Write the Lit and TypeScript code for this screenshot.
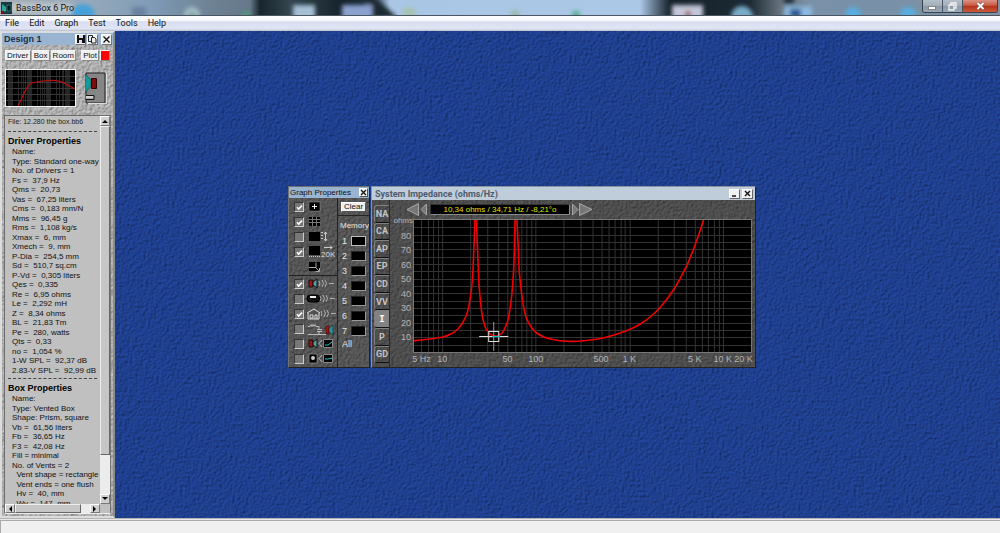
import { LitElement, html, svg, css } from "lit";
import { customElement, property, state } from "lit/decorators.js";

const DRIVER = [
  "Name:", "Type: Standard one-way driver", "No. of Drivers = 1", "Fs =  37,9 Hz", "Qms =  20,73",
  "Vas =  67,25 liters", "Cms =  0,183 mm/N", "Mms =  96,45 g", "Rms =  1,108 kg/s", "Xmax =  6, mm",
  "Xmech =  9, mm", "P-Dia =  254,5 mm", "Sd =  510,7 sq.cm", "P-Vd =  0,305 liters", "Qes =  0,335",
  "Re =  6,95 ohms", "Le =  2,292 mH", "Z =  8,34 ohms", "BL =  21,83 Tm", "Pe =  280, watts",
  "Qts =  0,33", "no =  1,054 %", "1-W SPL =  92,37 dB", "2.83-V SPL =  92,99 dB",
];
const BOX = [
  "Name:", "Type: Vented Box", "Shape: Prism, square", "Vb =  61,56 liters", "Fb =  36,65 Hz",
  "F3 =  42,08 Hz", "Fill = minimal", "No. of Vents = 2", "  Vent shape = rectangle",
  "  Vent ends = one flush", "  Hv =  40, mm", "  Wv =  147, mm",
];

const CURVE: [number, number][][] = [
  [[0, 120.7], [15.7, 119], [28.7, 117], [37.3, 113.7], [44, 108.7], [49, 102], [53.3, 92], [56, 78.7], [58, 62], [59.3, 38.7], [60.7, 0]],
  [[62.3, 0], [63.7, 38.7], [64.7, 62], [66.3, 82], [68.3, 97], [71.3, 107.7], [74.7, 113], [79, 115.7], [84, 115.7], [88, 112.7], [91.3, 106.7], [94, 98.7], [96.7, 82], [98.3, 65.3], [99.7, 42], [100.7, 0]],
  [[102.7, 0], [104, 28.7], [105, 52], [106.7, 68.7], [108.7, 83.7], [112, 98], [117.3, 107.7], [122.3, 113], [129, 116.7], [137.3, 119.3], [145.7, 120.7], [154, 121.3], [162.7, 121.3], [176, 120], [189.3, 117.7], [202.7, 114], [216, 109], [226, 103.7], [236, 96.5], [246, 86.7], [259.3, 69], [271, 47.7], [279.3, 27.5], [285, 11.3], [288.7, 0]],
];

const smooth = (p: [number, number][]) => {
  let d = `M${p[0][0]} ${p[0][1]}`;
  for (let i = 0; i < p.length - 1; i++) {
    const a = p[i - 1] ?? p[i], b = p[i], c = p[i + 1], e = p[i + 2] ?? c;
    d += `C${b[0] + (c[0] - a[0]) / 6} ${b[1] + (c[1] - a[1]) / 6} ${c[0] - (e[0] - b[0]) / 6} ${c[1] - (e[1] - b[1]) / 6} ${c[0]} ${c[1]}`;
  }
  return d;
};

const hzToX = (hz: number, width: number) => (Math.log10(hz / 5) / Math.log10(4000)) * width;

const frequencies = () => {
  const out: number[] = [];
  for (const decade of [1, 10, 100, 1000, 10000])
    for (let n = 1; n < 10; n++) {
      const f = n * decade;
      if (f > 5 && f < 20000) out.push(f);
    }
  return out;
};

/** Embossed stone surface that fills its positioned parent. */
@customElement("stone-surface")
class StoneSurface extends LitElement {
  @property() tint = "#888888";
  @property({ type: Number }) relief = 1;
  @property({ type: Number }) grain = 0.3;
  static styles = css`
    :host { position: absolute; inset: 0; z-index: 0; pointer-events: none; overflow: hidden; }
    svg { display: block; width: 100%; height: 100%; }
  `;
  render() {
    return html`<svg aria-hidden="true">
      <filter id="f" x="0" y="0" width="100%" height="100%" color-interpolation-filters="sRGB">
        <feTurbulence type="fractalNoise" baseFrequency=${this.grain} numOctaves="2" seed="4" result="n" />
        <feDiffuseLighting in="n" surfaceScale=${this.relief} diffuseConstant="1.15" lighting-color=${this.tint}>
          <feDistantLight azimuth="225" elevation="60" />
        </feDiffuseLighting>
      </filter>
      <rect width="100%" height="100%" filter="url(#f)" />
    </svg>`;
  }
}

/** Design panel docked at the left of the desktop. */
@customElement("design-panel")
class DesignPanel extends LitElement {
  static styles = css`
    :host { position: relative; display: flex; flex-direction: column; box-sizing: border-box; width: 115px; min-height: 0;
      border: 2px solid #dcdcdc; border-right-color: #8c8c8c; background: #acacac; color: #111; font: 8px/9px "Liberation Sans", Arial, sans-serif; }
    header, .tools, .view, .list { position: relative; z-index: 1; }
    header { display: flex; align-items: center; gap: 1px; height: 12px; padding: 0 1px 0 2px; background: #99b4d1; }
    h2 { margin: 0; flex: 1; font-size: 9px; line-height: 12px; color: #1b2c44; }
    button { margin: 0; padding: 0; box-sizing: border-box; background: #f0f0f0; color: #111; font: inherit; white-space: nowrap;
      border: 1px solid #fff; border-right-color: #777; border-bottom-color: #777; }
    header button { display: grid; place-items: center; width: 11px; height: 11px; }
    header .close { margin-left: 2px; }
    .tools { display: flex; gap: 1px; margin: 5px 3px 0; height: 11px; }
    .tools button { line-height: 9px; flex: 1 1 auto; border-color: #f4f4f4; border-right-color: #888; border-bottom-color: #888; }
    .tools .gap { margin-left: 4px; }
    .tools .swatch { flex: 0 0 10px; background: #f00; }
    .view { display: flex; align-items: center; justify-content: space-between; margin: 8px 6px 0 3px; }
    .mini { display: block; border: 1px solid #f4f4f4; background: #000; }
    .view svg { display: block; }
    .list { display: grid; grid-template: minmax(0, 1fr) 9px / minmax(0, 1fr) 10px; flex: 1; min-height: 0; margin: 8px 2px 2px; background: #c0c0c0;
      border: 1px solid #6c6c6c; border-right-color: #777; border-bottom-color: #eee; }
    .text { overflow: hidden; padding: 0 0 0 3px; white-space: nowrap; }
    .file { font-size: 7px; line-height: 12px; color: #222; }
    h3 { margin: 0; font-size: 9px; line-height: 11px; color: #000; }
    .rule { height: 3px; margin: 0 3px 4px 0; border-bottom: 1px dashed #444; }
    ul { display: grid; grid-auto-rows: 1fr; list-style: none; margin: 0; padding: 0 0 0 4px; }
    li { white-space: pre; }
    .driver { height: 228px; }
    .box { height: 114px; }
    .vbar, .hbar { display: flex; background: #ececec; }
    .vbar { flex-direction: column; }
    .hbar button, .vbar button { display: grid; place-items: center; flex: 0 0 10px; background: #d0d0d0; }
    .vbar button { width: 10px; }
    .vbar .up + .thumb { flex: 0 1 329px; }
    .thumb { background: #c6c6c6; border: 1px solid #eee; border-right-color: #666; border-bottom-color: #666; box-sizing: border-box; }
    .hbar .thumb { width: 66px; }
    .fill { flex: 1; }
  `;
  private miniGrid() {
    const W = 69;
    return frequencies().map((f) => svg`<path d="M${Math.round(hzToX(f, W)) + 0.5} 0V36" stroke="#999" stroke-opacity=".25" />`);
  }
  render() {
    return html`
      <stone-surface tint="#b0b0b0" relief="1" grain="0.38"></stone-surface>
      <header>
        <h2>Design 1</h2>
        <button aria-label="Save"><svg width="8" height="8"><path d="M0 0h8v8h-8z" fill="#111" /><path d="M2 0h4v3h-4zM2 5h3v3h-3z" fill="#dde" /></svg></button>
        <button aria-label="Copy"><svg width="9" height="9" fill="#eee" stroke="#222"><path d="M.5.5h4v6h-4z" /><path d="M3.5 2.5h3l1.5 1.5v4h-4.500z" /></svg></button>
        <button class="close" aria-label="Close"><svg width="7" height="7"><path d="M.5.5l6 6M6.5.5l-6 6" stroke="#111" stroke-width="1.3" /></svg></button>
      </header>
      <div class="tools">
        <button>Driver</button><button>Box</button><button>Room</button><button class="gap">Plot</button><button class="swatch" aria-label="Plot colour"></button>
      </div>
      <div class="view">
        <svg class="mini" width="69" height="36" role="img" aria-label="Response preview">
          ${this.miniGrid()}
          ${[6, 12, 18, 24, 30].map((y) => svg`<path d="M0 ${y}.5H69" stroke="#3a3a3a" />`)}
          <path d="M12 36C16 29 20 16 25 13Q32 12 37 11Q52 9 58 13L69 19" fill="none" stroke="#b80f0f" stroke-width="1.2" />
        </svg>
        <svg width="22" height="32" role="img" aria-label="Vented box">
          <path d="M1 1H20V31H1z" fill="#868686" stroke="#222" />
          <path d="M21.5 1V31.5H3" fill="none" stroke="#ddd" />
          <path d="M0 2L6 8V14L0 21z" fill="#159a9a" stroke="#0a4a4a" stroke-width=".6" />
          <path d="M6.5 6.5h5v10h-5z" fill="#7a0d0d" stroke="#300" />
          <path d="M1 23.5h8v4h-8" fill="#aaa" stroke="#111" /><path d="M1 25h7" stroke="#fff" />
        </svg>
      </div>
      <section class="list" aria-label="Design properties">
        <div class="text">
          <div class="file">File: 12.280 the box.bb6</div>
          <div class="rule"></div>
          <h3>Driver Properties</h3>
          <ul class="driver">${DRIVER.map((t) => html`<li>${t}</li>`)}</ul>
          <div class="rule"></div>
          <h3>Box Properties</h3>
          <ul class="box">${BOX.map((t) => html`<li>${t}</li>`)}</ul>
        </div>
        <div class="vbar">
          <button class="up" aria-label="Scroll up"><svg width="6" height="4"><path d="M0 4L3 1L6 4z" /></svg></button>
          <div class="thumb"></div><div class="fill"></div>
          <button aria-label="Scroll down"><svg width="6" height="4"><path d="M0 0L3 3L6 0z" /></svg></button>
        </div>
        <div class="hbar">
          <button aria-label="Scroll left"><svg width="4" height="6"><path d="M4 0L1 3L4 6z" /></svg></button>
          <div class="thumb"></div><div class="fill"></div>
          <button aria-label="Scroll right"><svg width="4" height="6"><path d="M0 0L3 3L0 6z" /></svg></button>
        </div>
      </section>`;
  }
}

const waves = (x: number) => svg`<path d="M${x} 4q2 2.5 0 5M${x + 3} 3q3 3.5 0 7M${x + 6} 3q3 3.5 0 7M${x + 10} 6.5h5" fill="none" stroke="#bbb" stroke-width=".9" />`;
const speaker = (x: number) => svg`<g transform="translate(${x} 0)"><path d="M1 3h4v7h-4z" fill="#a01414" stroke="#111" /><path d="M5 5L9 2V11L5 8z" fill="#59a0a4" stroke="#111" /></g>`;

const OPTIONS: { label: string; on: boolean | null; art: unknown }[] = [
  { label: "Cursor", on: true, art: svg`<path d="M1 2h11v9h-11z" fill="#000" stroke="#999" stroke-width=".5" /><path d="M6.5 4v5M4 6.5h5" stroke="#eee" />` },
  { label: "Grid", on: true, art: svg`<path d="M1 2h11v9h-11z" fill="#000" /><path d="M1 4.5h11M1 7.5h11M4.5 2v9M8.5 2v9" stroke="#777" />` },
  { label: "Vertical scale", on: false, art: svg`<path d="M1 2h11v9h-11z" fill="#000" /><path d="M13 2.5h2M13 5.5h2M13 8.5h2M17.5 2v9M16 4l1.5-2l1.5 2M16 9l1.5 2l1.5-2" fill="none" stroke="#ccc" />` },
  { label: "Extend to 20K", on: true, art: svg`<path d="M1 1h11v9h-11z" fill="#000" /><path d="M1 11.5h11" stroke="#ccc" stroke-dasharray="1 1" /><path d="M16 2.5h8M22 .5l2 2l-2 2" fill="none" stroke="#ccc" /><text x="13" y="12">20K</text>` },
  { label: "Resize", on: null, art: svg`<path d="M1 2h11v9h-11z" fill="#000" /><path d="M1 7.5h7v-5M8 8l3 3M11.5 8v3.5h-4" fill="none" stroke="#aaa" />` },
  { label: "Driver response", on: true, art: svg`${speaker(0)}${waves(11)}` },
  { label: "Vent response", on: false, art: svg`<path d="M2 3h7a3 3.5 0 0 1 0 7h-7a3 3.5 0 0 1 0-7z" fill="#111" stroke="#000" /><path d="M2 5h6" stroke="#eee" stroke-width="2" />${waves(12)}` },
  { label: "Room response", on: true, art: svg`<path d="M-1 6L6 2L12 6M0 6v6h11v-6M2 8h3v3h-3zM7 12v-4h2v4" fill="none" stroke="#ddd" />${waves(13)}` },
  { label: "Crossover response", on: false, art: svg`<path d="M0 4.5h2q1-4 2 0q1-4 2 0q1-4 2 0h3v3M9 7.5h5M9 9.5h5M11 10v3M0 12.5h18" fill="none" stroke="#bbb" /><path d="M18 4h3v8h-3z" fill="#a11" stroke="#111" stroke-width=".5" /><path d="M21 6l4-3v10l-4-3z" fill="#2a8f9a" stroke="#111" stroke-width=".5" />` },
  { label: "Driver data", on: false, art: svg`${speaker(0)}<path d="M14 3l-3 3.5l3 3.5" fill="none" stroke="#bbb" /><path d="M15.5 2.5h9v8h-9z" fill="#000" stroke="#888" /><path d="M17 8h3l4-3" fill="none" stroke="#1cc" />` },
  { label: "Box data", on: false, art: svg`<path d="M1 2h8v9h-8z" fill="#000" stroke="#aaa" stroke-width=".6" /><circle cx="5" cy="6" r="2" fill="#ccc" /><path d="M14 3l-3 3.5l3 3.5" fill="none" stroke="#bbb" /><path d="M15.5 2.5h9v8h-9z" fill="#000" stroke="#888" /><path d="M17 7h3l4-1" fill="none" stroke="#1cc" />` },
];

/** Floating palette with the graph display options. */
@customElement("graph-properties")
class GraphProperties extends LitElement {
  static styles = css`
    :host { position: relative; display: flex; flex-direction: column; box-sizing: border-box; border: 1px solid #707070; border-right-color: #222; border-bottom-color: #222; background: #555;
      font: 8px/10px "Liberation Sans", Arial, sans-serif; color: #e4e4e4; overflow: hidden; }
    header { position: relative; z-index: 1; display: flex; align-items: center; height: 11px; background: #99b4d1; color: #111; padding: 0 1px 0 1px; }
    h2 { margin: 0; flex: 1; font-size: 8px; font-weight: 400; white-space: nowrap; }
    header button { display: grid; place-items: center; width: 9px; height: 9px; }
    button { margin: 0; padding: 0; box-sizing: border-box; background: #f0f0f0; border: 1px solid #fff; border-right-color: #555; border-bottom-color: #555; font: inherit; color: #111; }
    .cols { position: relative; z-index: 1; flex: 1; display: grid; grid-template-columns: 49px 1fr; }
    .left, .right { display: flex; flex-direction: column; }
    .left { border-right: 1px solid #222; padding-top: 1px; }
    label, .plain { display: flex; align-items: center; gap: 4px; height: 15px; padding-left: 5px; box-sizing: border-box; }
    .plain { padding-left: 19px; }
    .divide { margin-top: 1px; border-top: 1px solid #222; }
    label svg, .plain svg { overflow: visible; display: block; }
    text { font: 8px "Liberation Sans", Arial, sans-serif; fill: #ddd; }
    input { appearance: none; flex: none; display: grid; place-items: center; margin: 0; width: 10px; height: 10px; box-sizing: border-box; background: #777; border: 1px solid #333; border-right-color: #ccc; border-bottom-color: #ccc; }
    input:checked::after { content: ""; width: 5px; height: 2px; border: solid #fff; border-width: 0 0 2px 2px; box-sizing: content-box; rotate: -45deg; scale: .8; }
    .top { display: flex; padding: 4px 3px; height: 18px; box-sizing: border-box; border-bottom: 1px solid #222; }
    .top button { width: 25px; height: 10px; line-height: 8px; }
    .mem { margin: 5px 0 2px 2px; white-space: nowrap; }
    .slot { display: flex; align-items: center; gap: 4px; height: 15px; padding-left: 4px; font-size: 9px; }
    .slot button { width: 15px; height: 10px; background: #000; border-color: #222 #999 #999 #222; }
    .slot button.active { border-color: #bbb; }
    .all { padding-left: 4px; font-size: 9px; line-height: 12px; }
  `;
  render() {
    return html`
      <stone-surface tint="#565656" relief="1" grain="0.38"></stone-surface>
      <header><h2>Graph Properties</h2><button aria-label="Close"><svg width="7" height="7"><path d="M1 1l5 5M6 1l-5 5" stroke="#111" stroke-width="1.3" /></svg></button></header>
      <div class="cols">
        <div class="left">
          ${OPTIONS.map((o, i) => {
            const art = html`<svg width="26" height="13" aria-hidden="true">${o.art}</svg>`;
            const cls = i === 5 ? "divide" : "";
            return html`<div class=${cls}>${o.on === null
              ? html`<div class="plain">${art}</div>`
              : html`<label><input type="checkbox" aria-label=${o.label} .checked=${o.on} />${art}</label>`}</div>`;
          })}
        </div>
        <div class="right">
          <div class="top"><button>Clear</button></div>
          <div class="mem">Memory</div>
          ${[1, 2, 3, 4, 5, 6, 7].map((n) => html`<div class="slot">${n}<button class=${n === 1 ? "active" : ""} aria-label="Memory ${n}"></button></div>`)}
          <div class="all">All</div>
        </div>
      </div>`;
  }
}

/** Impedance graph window. */
@customElement("impedance-window")
class ImpedanceWindow extends LitElement {
  @state() tab = "I";
  static styles = css`
    :host { position: relative; display: flex; flex-direction: column; box-sizing: border-box; border: 1px solid #8a94a0; border-right-color: #222; border-bottom-color: #222; background: #4a4a4a;
      font: 8px/10px "Liberation Sans", Arial, sans-serif; color: #b4b4b4; overflow: hidden; }
    header { position: relative; z-index: 1; display: flex; align-items: center; gap: 2px; height: 13px; padding: 0 2px 0 3px; background: #bfcddb; color: #4d5b6c; }
    h2 { margin: 0; flex: 1; font: 700 9px/12px Roboto, sans-serif; white-space: nowrap; }
    button { margin: 0; padding: 0; box-sizing: border-box; font: inherit; border: 1px solid #fff; border-right-color: #666; border-bottom-color: #666; background: #f0f0f0; color: #111; }
    header button { display: grid; place-items: center; width: 11px; height: 10px; }
    .body { position: relative; z-index: 1; flex: 1; display: grid; grid-template-columns: 18px 1fr; }
    nav { display: flex; flex-direction: column; padding: 5px 0 4px 2px; border-right: 1px solid #2a2a2a; }
    nav button { flex: 1; background: none; color: #c4c4c4; font: 700 9px/12px Roboto, sans-serif; border: 1px solid #808080; border-right: 0; border-bottom-color: #111; border-radius: 3px 0 0 3px; }
    nav button.on { background: #828282; color: #fff; font-family: "DejaVu Sans Mono", monospace; }
    .pane { display: grid; grid-template: 20px 132px 1fr / 22px 1fr; padding: 0 4px 0 2px; }
    .nav-row { grid-column: 1 / -1; display: flex; align-items: center; padding: 0 0 1px 14px; }
    .nav-row button { background: none; border: 0; display: block; }
    .nav-row svg { display: block; }
    output { width: 140px; height: 11px; box-sizing: border-box; margin: 0 1px 0 2px; background: #000; border: 1px solid #333; border-right-color: #888; border-bottom-color: #888; color: #e2e200; text-align: center; line-height: 9px; white-space: nowrap; }
    .ys { display: flex; flex-direction: column; align-items: flex-end; justify-content: space-between; padding: 0 3px 10px 0; font-size: 9px; margin-top: -4px; line-height: 10px; }
    .unit { font-size: 8px; margin-right: -2px; }
    .plot { display: block; box-sizing: border-box; background: #000; outline: 1px solid #777; overflow: hidden; }
    .xs { grid-column: 2; position: relative; font-size: 9px; line-height: 15px; white-space: nowrap; }
    .xs span { position: absolute; transform: translateX(-50%); }
  `;
  render() {
    const W = 336, H = 132;
    const ticks: [string, number][] = [["5 Hz", 6], ["10", 10], ["50", 50], ["100", 100], ["500", 500], ["1 K", 1000], ["5 K", 5000], ["10 K", 10000], ["20 K", 16600]];
    return html`
      <stone-surface tint="#4e4e4e" relief="1" grain="0.38"></stone-surface>
      <header>
        <h2>System Impedance (ohms/Hz)</h2>
        <button aria-label="Minimize"><svg width="7" height="7"><path d="M1 6h4" stroke="#111" stroke-width="1.5" /></svg></button>
        <button aria-label="Close"><svg width="7" height="7"><path d="M1 1l5 5M6 1l-5 5" stroke="#111" stroke-width="1.4" /></svg></button>
      </header>
      <div class="body">
        <nav>${["NA", "CA", "AP", "EP", "CD", "VV", "I", "P", "GD"].map((t) => html`<button class=${t === this.tab ? "on" : ""} @click=${() => (this.tab = t)}>${t}</button>`)}</nav>
        <div class="pane">
          <div class="nav-row">
            <button aria-label="Fast back"><svg width="14" height="13"><path d="M1 6.5L12.5 .5V12.5z" fill="#777" stroke="#b8b8b8" stroke-width=".8" /></svg></button>
            <button aria-label="Back"><svg width="8" height="13"><path d="M1 6.5L6.5 1V12z" fill="#777" stroke="#b8b8b8" stroke-width=".8" /></svg></button>
            <output>10,34 ohms / 34,71 Hz / -8,21°o</output>
            <button aria-label="Forward"><svg width="8" height="13"><path d="M7 6.5L1.5 1V12z" fill="#777" stroke="#b8b8b8" stroke-width=".8" /></svg></button>
            <button aria-label="Fast forward"><svg width="14" height="13"><path d="M13 6.5L.5 .5V12.5z" fill="#777" stroke="#b8b8b8" stroke-width=".8" /></svg></button>
          </div>
          <div class="ys"><span class="unit">ohms</span>${[80, 70, 60, 50, 40, 30, 20, 10].map((n) => html`<span>${n}</span>`)}</div>
          <svg class="plot" width="100%" height="132" viewBox="0 0 336 132" preserveAspectRatio="none" role="img" aria-label="Impedance curve">
            ${frequencies().map((f) => svg`<path d="M${Math.round(hzToX(f, W)) + 0.5} 0V${H}" stroke="#333" />`)}
            ${Array.from({ length: 17 }, (_, i) => svg`<path d="M0 ${Math.round(((i + 1) * H) / 18)}.5H${W}" stroke="#333" />`)}
            ${CURVE.map((c) => svg`<path d=${smooth(c)} fill="none" stroke="#f00000" stroke-width="1.6" />`)}
            <path d="M65 116.5H94" stroke="#ddd" /><path d="M79.5 102V131" stroke="#999" />
            <path d="M74.5 111.5h10v10h-10z" fill="none" stroke="#ddd" /><path d="M78 116.5h8" stroke="#0cc" />
          </svg>
          <div class="xs">${ticks.map(([t, f]) => html`<span style="left:${(hzToX(f, 1) * 100).toFixed(2)}%">${t}</span>`)}</div>
        </div>
      </div>`;
  }
}

@customElement("app-root")
class AppRoot extends LitElement {
  static styles = css`
    :host { display: flex; flex-direction: column; height: 100vh; overflow: hidden; font-family: Roboto, sans-serif; }
    .title { display: flex; align-items: center; height: 16px; box-sizing: border-box; border-bottom: 1px solid #4a5562; overflow: hidden; position: relative;
      background: linear-gradient(90deg, #a5adb3 0, #96a8ba 9%, #7f9cb8 15%, #6e8294 21%, #66788a 25%, #16242d 26%, #34464f 29%, #16242d 34%, #1c2b36 37%, #a9c6e4 39%, #abc8e6 64%, #15212a 67%, #1b2a33 75%, #66727d 78%, #7a91a8 81%, #7890a8 88%, #8393a3 100%); }
    .glow { position: absolute; inset: 0; width: 100%; height: 100%; }
    .title > .logo, .title > h1, .caption { position: relative; }
    .logo { margin-left: 1px; }
    h1 { margin: 0 0 0 4px; flex: 1; font-size: 9px; line-height: 14px; font-weight: 400; color: #101418; }
    .caption { display: flex; align-self: flex-start; height: 13px; margin-right: 2px; border: 1px solid #3a444e; border-top: 0; border-radius: 0 0 3px 3px; overflow: hidden; box-sizing: border-box; }
    .caption button { margin: 0; padding: 0; border: 0; border-right: 1px solid #4b5560; width: 20px; display: grid; place-items: center; background: linear-gradient(#b4c0cb, #a0adb9 50%, #8b98a5 50%, #9aa9b6); }
    .caption .x { width: 34px; border: 0; background: linear-gradient(#dc9384, #c85a44 45%, #b23119 50%, #cc5a3c); }
    .menu { display: flex; gap: 10px; height: 15px; box-sizing: border-box; padding: 0 5px; background: linear-gradient(#fff 0, #f6f8fb 30%, #d9dff0 38%, #e0e5f4 85%, #b9bfce 100%); }
    .menu button { margin: 0; padding: 0; border: 0; background: none; font: 9px/15px Roboto, sans-serif; color: #111; }
    main { position: relative; flex: 1; min-height: 0; display: flex; background: #1f4191; overflow: hidden; }
    graph-properties { position: absolute; left: 288px; top: 155px; width: 82px; height: 182px; z-index: 2; }
    impedance-window { position: absolute; left: 371px; top: 155px; width: 385px; height: 182px; z-index: 2; }
    footer { height: 15px; box-sizing: border-box; background: #f0f0f0; border-top: 1px solid #b4b4b4; box-shadow: inset 0 1px #e8e8e8, inset 1px 2px #aaa; }
  `;
  render() {
    return html`
      <header class="title">
        <svg class="glow" aria-hidden="true">
          <filter id="b" x="-50%" y="-50%" width="200%" height="200%"><feGaussianBlur stdDeviation="2" /></filter>
          <g filter="url(#b)">
            <circle cx="83" cy="16" r="12" fill="#45a0d8" /><path d="M132 7h14v10h-14z" fill="#68829f" />
            <circle cx="192" cy="15" r="8" fill="#a4bcc8" /><circle cx="192" cy="16" r="3" fill="#4f9a68" />
            <circle cx="246" cy="15" r="4" fill="#4f9a78" />
            <path d="M365 -4L365 18L398 18L378 0z" fill="#1a2931" />
            <path d="M293 5h22v14h-22z" fill="#a5c0d5" /><path d="M342 5h30v14h-30z" fill="#8ba2d0" />
            <circle cx="409" cy="14" r="7" fill="#a7c3b4" /><circle cx="515" cy="15" r="5" fill="#9cbcae" /><circle cx="576" cy="15" r="4" fill="#4bae89" />
            <path d="M672 5h31v14h-31z" fill="#c5c6d8" /><circle cx="688" cy="14" r="3" fill="#a04458" /><circle cx="742" cy="17" r="11" fill="#78aac8" />
            <path d="M784 6h28v12h-28z" fill="#8bb8e0" /><path d="M790 9h11v8h-11z" fill="#1b5590" /><path d="M784 -2h10v6h-10z" fill="#1a2931" />
            <circle cx="853" cy="15" r="8" fill="#58aee0" /><circle cx="908" cy="15" r="8" fill="#58aee0" />
            <path d="M10 8h62" stroke="#cdd4d9" stroke-width="9" opacity=".7" />
          </g>
        </svg>
        <svg class="logo" width="11" height="12" aria-hidden="true"><path d="M0 0h11v12h-11z" fill="#123a40" /><path d="M1 2l4 3v4l-4 2z" fill="#2aa3a0" /><path d="M0 9h3v3h-3z" fill="#900" /><path d="M6 3h4v6h-4z" fill="#0c1b1e" stroke="#6aa" stroke-width=".5" /></svg>
        <h1>BassBox 6 Pro</h1>
        <div class="caption">
          <button aria-label="Minimize"><svg width="9" height="9"><path d="M.5 4.5h7v3h-7z" fill="#fff" stroke="#555" stroke-width=".6" /></svg></button>
          <button aria-label="Restore"><svg width="9" height="9" fill="none" stroke="#f4f4f4" stroke-width="1.3"><path d="M3 2.5V1h5v5h-1.5M1 3h5v5h-5z" /></svg></button>
          <button class="x" aria-label="Close"><svg width="9" height="8"><path d="M1.5 1l6 6M7.5 1l-6 6" stroke="#544" stroke-width="3" /><path d="M1.5 1l6 6M7.5 1l-6 6" stroke="#fff" stroke-width="2" /></svg></button>
        </div>
      </header>
      <nav class="menu">${["File", "Edit", "Graph", "Test", "Tools", "Help"].map((m) => html`<button>${m}</button>`)}</nav>
      <main>
        <stone-surface tint="#1f4090" relief="1" grain="0.38"></stone-surface>
        <design-panel></design-panel>
        <graph-properties></graph-properties>
        <impedance-window></impedance-window>
      </main>
      <footer></footer>`;
  }
}
